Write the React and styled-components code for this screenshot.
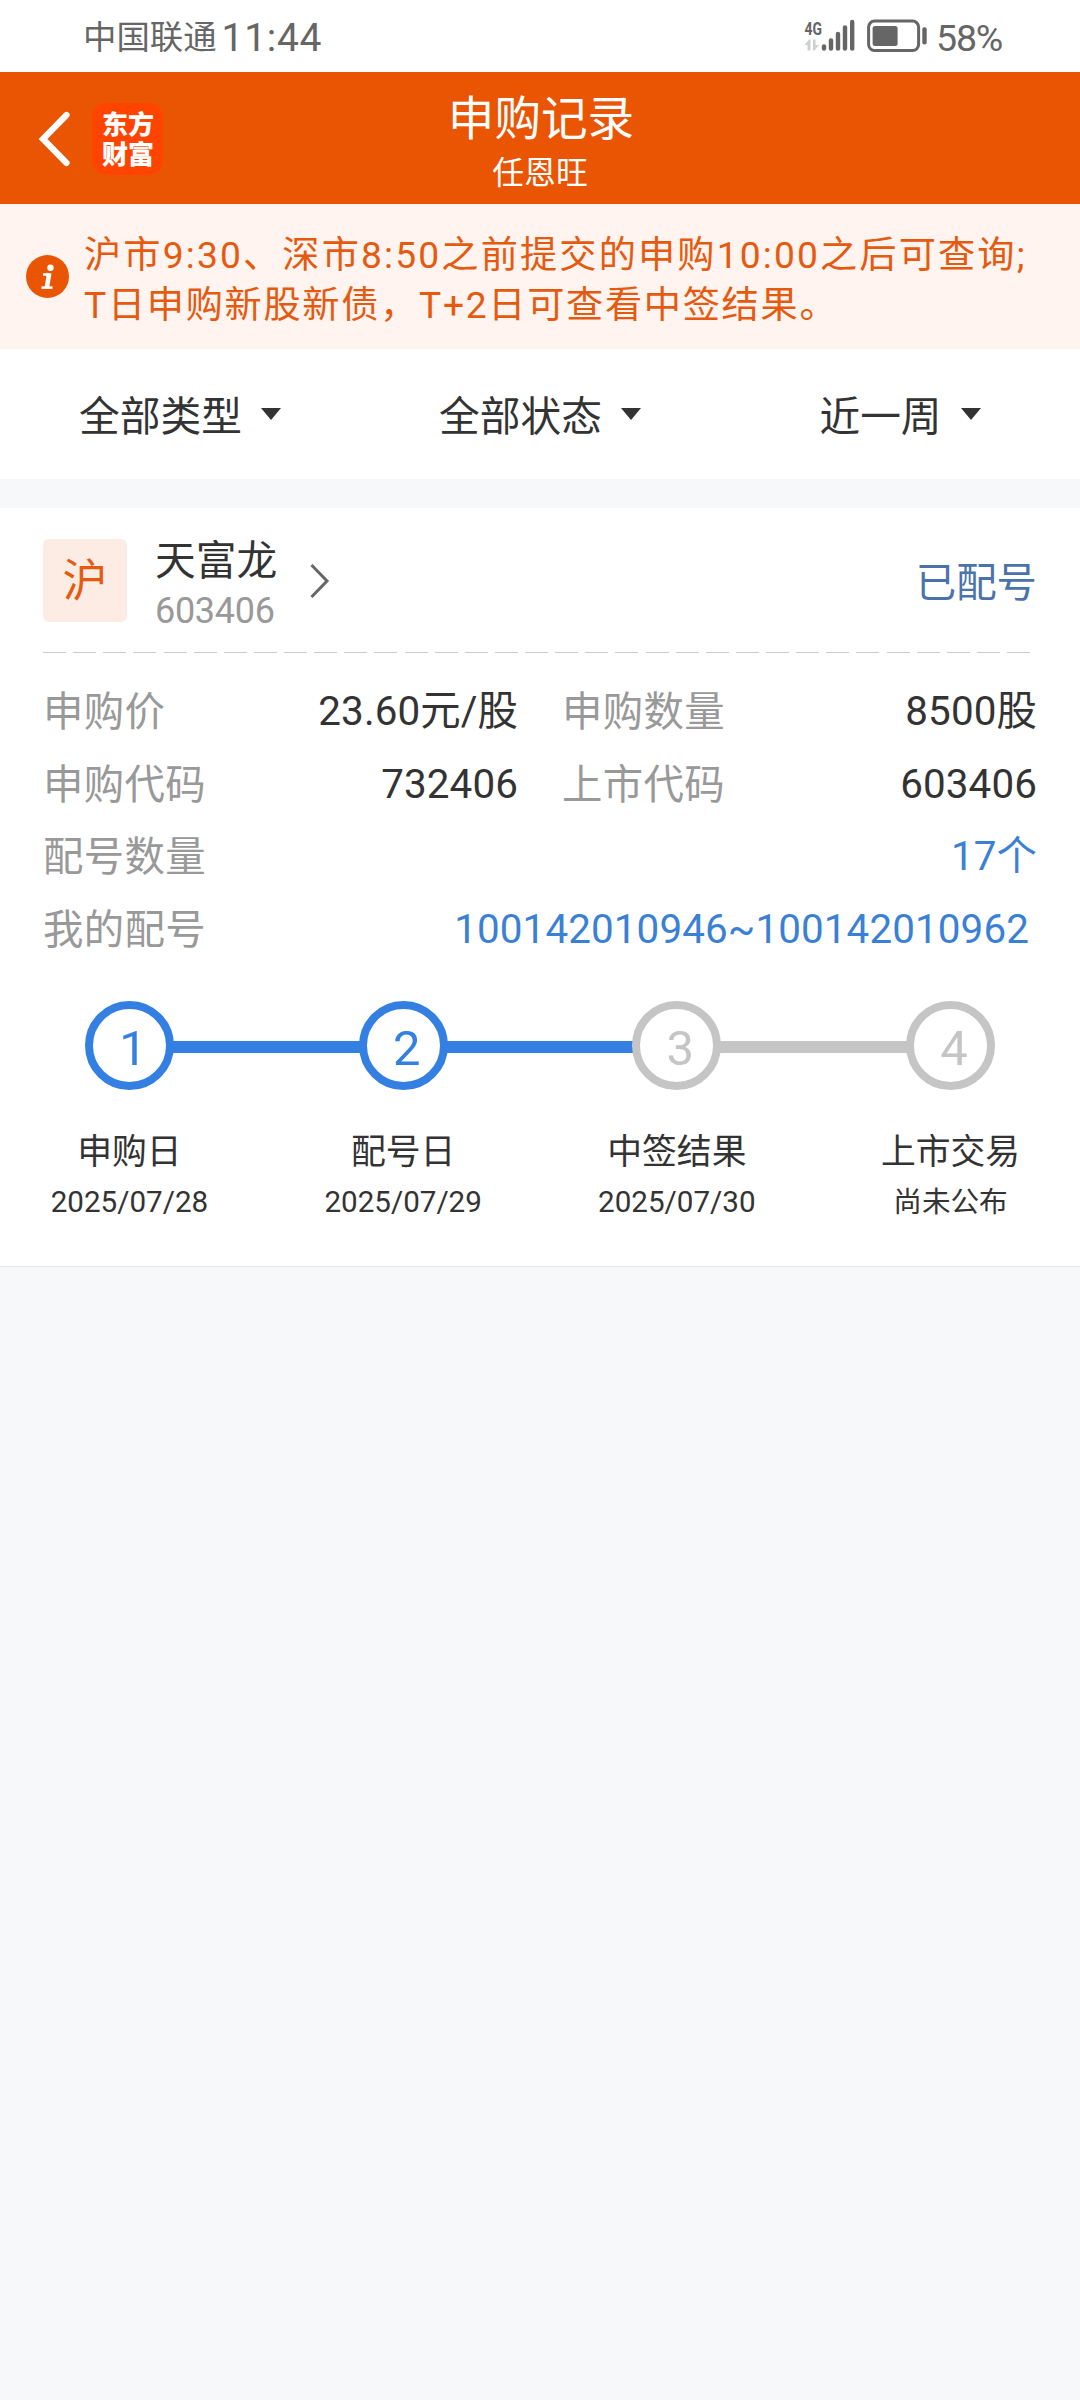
import React from "react";
import styled, { createGlobalStyle } from "styled-components";

const GlobalStyle = createGlobalStyle`
  * {
    box-sizing: border-box;
  }
  body {
    margin: 0;
    background: #f6f8fa;
    color: #333;
    font-family: Roboto, "Noto Sans CJK SC", sans-serif;
  }
`;

let Page = styled.div`
  width: 1080px;
  min-height: 2400px;
  overflow: hidden;
`;

let StatusBar = styled.div`
  display: flex;
  align-items: center;
  height: 72px;
  padding: 4px 75px 0 83px;
  background: #fff;
  color: #666;
  font-size: 33.4px;
  line-height: 68px;
`;

let Clock = styled.span`
  margin-left: 5px;
  font-size: 39px;
  letter-spacing: 0.7px;
`;

let Signal = styled.svg`
  margin: -4px 11px 0 auto;
  overflow: visible;
`;

let Battery = styled.svg`
  margin: -4px 9px 0 0;
`;

let Percent = styled.span`
  width: 69px;
  font-size: 37.5px;
  letter-spacing: -1.2px;
  white-space: nowrap;
`;

let Header = styled.header`
  display: grid;
  grid-template-columns: 200px 1fr 200px;
  height: 132px;
  background: #ea5504;
  color: #fff;
`;

let HeaderLeft = styled.div`
  display: flex;
  align-items: center;
  padding: 2px 0 0 37px;
`;

let Logo = styled.div`
  width: 71px;
  height: 72px;
  margin-left: 20px;
  padding: 5px 0 0 1px;
  border-radius: 15px;
  background: #ff4400;
  font-family: "Noto Sans CJK SC", sans-serif;
  font-size: 26px;
  font-weight: 900;
  line-height: 30px;
  text-align: center;
`;

let TitleBox = styled.div`
  padding-top: 15px;
  text-align: center;
`;

let Title = styled.div`
  padding-left: 2px;
  font-size: 46.6px;
  line-height: 64px;
`;

let SubTitle = styled.div`
  font-size: 31.8px;
  line-height: 45px;
`;

let Notice = styled.div`
  display: flex;
  align-items: center;
  height: 145px;
  padding: 0 0 0 26px;
  background: #fff4ef;
  color: #e55a0f;
`;

let NoticeText = styled.div`
  margin-left: 15px;
  padding-top: 7px;
  font-size: 37.2px;
  line-height: 50px;
  white-space: nowrap;
`;

let NoticeLine = styled.div`
  letter-spacing: ${(props) => props.$spacing}px;
`;

let Filters = styled.div`
  display: flex;
  height: 130px;
  margin-bottom: 29px;
  background: #fff;
`;

let Filter = styled.div`
  flex: 1;
  display: flex;
  align-items: center;
  justify-content: center;
  padding-bottom: 2px;
  font-size: 40.7px;
`;

let Caret = styled.span`
  margin: 2px 0 0 19px;
  border: 10px solid transparent;
  border-top: 12px solid #333;
  border-bottom: 0;
`;

let Card = styled.section`
  height: 759px;
  border-bottom: 1px solid #e8e8e8;
  background: #fff;
`;

let Stock = styled.div`
  display: flex;
  align-items: flex-start;
  height: 144px;
  padding: 31px 43px 0 43px;
`;

let Market = styled.div`
  width: 84px;
  height: 83px;
  border-radius: 6px;
  background: #fdece4;
  color: #e55a0f;
  font-size: 45px;
  line-height: 86px;
  text-align: center;
`;

let StockName = styled.div`
  margin: -4px 33px 0 28px;
  font-size: 40.7px;
  line-height: 52px;
`;

let StockCode = styled.div`
  color: #999;
  font-size: 36px;
  line-height: 49px;
  letter-spacing: -0.3px;
`;

let State = styled.div`
  margin-left: auto;
  color: #4a73ab;
  font-size: 40.4px;
  line-height: 90px;
`;

let Divider = styled.div`
  display: flex;
  justify-content: space-between;
  width: 987px;
  height: 1px;
  margin-left: 43px;
`;

let Dash = styled.span`
  width: 23px;
  background: #ccc;
`;

let Info = styled.div`
  display: grid;
  grid-template-columns: 475px 475px;
  column-gap: 44px;
  grid-auto-rows: 72.7px;
  padding: 23px 43px 0;
`;

let InfoItem = styled.div`
  display: flex;
  justify-content: space-between;
  grid-column: ${(props) => (props.$wide ? "1 / -1" : "auto")};
  font-size: 40.4px;
  line-height: 74px;
`;

let Label = styled.span`
  color: #999;
  letter-spacing: 0.4px;
`;

let Value = styled.span`
  padding-right: ${(props) => props.$inset || 0}px;
  color: ${(props) => (props.$link ? "#3a81d6" : "#333")};
  line-height: 72px;
  letter-spacing: 0.1px;
`;

let Steps = styled.div`
  display: grid;
  grid-template-columns: repeat(4, 273.7px);
  justify-content: center;
  margin-top: 34px;
`;

let Step = styled.div`
  text-align: center;
`;

let Track = styled.div`
  display: flex;
  align-items: center;
`;

let Line = styled.div`
  flex: 1;
  height: 12px;
  margin: 4px -1px 0;
  background: ${(props) => props.$color};
`;

let Circle = styled.div`
  width: 89px;
  height: 89px;
  padding: 4px 0 0 7px;
  border: 8.5px solid ${(props) => props.$color};
  border-radius: 50%;
  color: ${(props) => props.$color};
  font-size: 49px;
  line-height: 71px;
`;

let StepName = styled.div`
  margin-top: 37px;
  font-size: 34.8px;
  line-height: 50px;
`;

let StepDate = styled.div`
  font-size: ${(props) => (props.$text ? 28.6 : 29.6)}px;
  line-height: 50px;
`;

const BLUE = "#3380e2";
const GRAY = "#c5c5c5";

const filters = ["全部类型", "全部状态", "近一周"];

const infos = [
  { label: "申购价", value: "23.60元/股" },
  { label: "申购数量", value: "8500股" },
  { label: "申购代码", value: "732406" },
  { label: "上市代码", value: "603406" },
  { label: "配号数量", value: "17个", wide: true, link: true },
  {
    label: "我的配号",
    value: "100142010946~100142010962",
    wide: true,
    link: true,
    inset: 8,
  },
];

const steps = [
  { name: "申购日", date: "2025/07/28", color: BLUE, before: "transparent", after: BLUE },
  { name: "配号日", date: "2025/07/29", color: BLUE, before: BLUE, after: BLUE },
  { name: "中签结果", date: "2025/07/30", color: GRAY, before: BLUE, after: GRAY },
  { name: "上市交易", date: "尚未公布", color: GRAY, before: GRAY, after: "transparent", text: true },
];

function SignalIcon() {
  return (
    <Signal width="52" height="34" viewBox="0 0 52 34">
      <text
        x="0.5"
        y="15.5"
        fill="#666"
        fontFamily="Roboto, sans-serif"
        fontSize="19"
        fontWeight="700"
        textLength="17.5"
        lengthAdjust="spacingAndGlyphs"
      >
        4G
      </text>
      <path d="M0.5 26 L5 20.5 H6.5 V31.5 H3.5 V26 Z M9 20.5 H11.5 V26 H15 L10.5 31.5 H9 Z" fill="#d0d0d0" />
      <g stroke="#666" strokeWidth="4.4" strokeLinecap="round">
        <path d="M20 27.5V29.5" />
        <path d="M27 21.5V29.5" />
        <path d="M34 15V29.5" />
        <path d="M41 8.5V29.5" />
        <path d="M48.2 3V29.5" />
      </g>
    </Signal>
  );
}

function BatteryIcon() {
  return (
    <Battery width="60" height="34" viewBox="0 0 60 34">
      <rect x="1.6" y="2.1" width="50" height="29.4" rx="6" fill="none" stroke="#666" strokeWidth="3" />
      <rect x="5.6" y="7" width="25" height="20" rx="2.5" fill="#666" />
      <rect x="55.3" y="8.2" width="4.4" height="17.2" rx="2" fill="#666" />
    </Battery>
  );
}

function App() {
  return (
    <Page>
      <GlobalStyle />
      <StatusBar>
        <span>中国联通</span>
        <Clock>11:44</Clock>
        <SignalIcon />
        <BatteryIcon />
        <Percent>58%</Percent>
      </StatusBar>

      <Header>
        <HeaderLeft>
          <svg width="35" height="58" viewBox="0 0 35 58">
            <path d="M29.5 5 L6 29 L29.5 53" fill="none" stroke="#fff" strokeWidth="6.2" strokeLinecap="round" />
          </svg>
          <Logo>
            东方
            <br />
            财富
          </Logo>
        </HeaderLeft>
        <TitleBox>
          <Title>申购记录</Title>
          <SubTitle>任恩旺</SubTitle>
        </TitleBox>
      </Header>

      <Notice>
        <svg width="43" height="43" viewBox="0 0 43 43">
          <circle cx="21.5" cy="21.5" r="21.5" fill="#ea5504" />
          <circle cx="24.5" cy="12.8" r="3.2" fill="#fff" />
          <path d="M17 19.5 H23" fill="none" stroke="#fff" strokeWidth="2.6" />
          <path d="M23.2 18.2 L21 32" fill="none" stroke="#fff" strokeWidth="4.6" />
          <path d="M15.5 32.6 H26.5" fill="none" stroke="#fff" strokeWidth="2.6" />
        </svg>
        <NoticeText>
          <NoticeLine $spacing={2.15}>
            沪市9:30、深市8:50之前提交的申购10:00之后可查询;
          </NoticeLine>
          <NoticeLine $spacing={1.7}>
            T日申购新股新债，T+2日可查看中签结果。
          </NoticeLine>
        </NoticeText>
      </Notice>

      <Filters>
        {filters.map((name) => (
          <Filter key={name}>
            {name}
            <Caret />
          </Filter>
        ))}
      </Filters>

      <Card>
        <Stock>
          <Market>沪</Market>
          <StockName>
            天富龙
            <StockCode>603406</StockCode>
          </StockName>
          <svg width="20" height="83" viewBox="0 0 20 83">
            <path d="M1.5 26 L17 42 L1.5 58" fill="none" stroke="#666" strokeWidth="3" />
          </svg>
          <State>已配号</State>
        </Stock>
        <Divider>
          {Array.from({ length: 33 }, (_, i) => (
            <Dash key={i} />
          ))}
        </Divider>
        <Info>
          {infos.map((item) => (
            <InfoItem key={item.label} $wide={item.wide}>
              <Label>{item.label}</Label>
              <Value $link={item.link} $inset={item.inset}>
                {item.value}
              </Value>
            </InfoItem>
          ))}
        </Info>
        <Steps>
          {steps.map((step, i) => (
            <Step key={step.name}>
              <Track>
                <Line $color={step.before} />
                <Circle $color={step.color}>{i + 1}</Circle>
                <Line $color={step.after} />
              </Track>
              <StepName>{step.name}</StepName>
              <StepDate $text={step.text}>{step.date}</StepDate>
            </Step>
          ))}
        </Steps>
      </Card>
    </Page>
  );
}

export default App;
